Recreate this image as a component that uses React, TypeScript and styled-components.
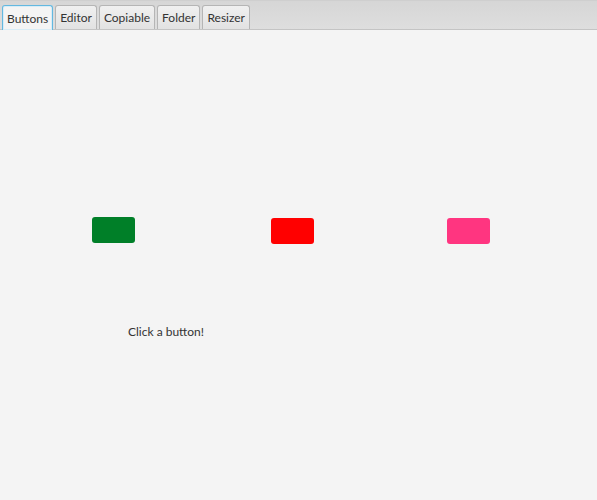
import React, { useState } from 'react'
import styled, { createGlobalStyle } from 'styled-components'

const Global = createGlobalStyle`
  html, body { margin: 0; padding: 0; background: #f4f4f4; }
  body { font-family: Lato, "Open Sans", "Liberation Sans", sans-serif; font-size: 12px; color: #333; }
`

const Page = styled.div`
  width: 597px;
  height: 500px;
  display: flex;
  flex-direction: column;
  background: #f4f4f4;
  overflow: hidden;
`

const TabBar = styled.div`
  height: 30px;
  box-sizing: border-box;
  display: flex;
  align-items: flex-end;
  gap: 2px;
  padding: 0 0 0 2px;
  background: linear-gradient(#d6d6d6, #dedede);
  border-bottom: 1px solid #c4c4c4;
  border-top: 1px solid #cfcfcf;
`

const Tab = styled.div<{ $active?: boolean }>`
  box-sizing: border-box;
  padding: 0 4px;
  display: flex;
  align-items: center;
  justify-content: center;
  border: 1px solid ${(p) => (p.$active ? '#63b8e0' : '#b5b5b5')};
  border-bottom: none;
  border-radius: 3px 3px 0 0;
  background: ${(p) => (p.$active ? '#f4f4f4' : 'linear-gradient(#f0f0f0, #e2e2e2)')};
  box-shadow: ${(p) => (p.$active ? 'inset 0 0 0 1px #d8ecf6' : 'none')};
  margin-bottom: ${(p) => (p.$active ? '-1px' : '0')};
  height: ${(p) => (p.$active ? '25px' : '24px')};
  color: #333;
  font-size: 12px;
  cursor: default;
`

const Content = styled.div`
  flex: 1;
  display: flex;
  flex-direction: column;
  padding-top: 187px;
`

const ButtonRow = styled.div`
  display: flex;
  align-items: flex-start;
  padding-left: 92px;
`

const ColorButton = styled.button<{ $color: string; $drop?: number; $left?: number }>`
  width: 43px;
  height: 26px;
  border: none;
  border-radius: 3px;
  background: ${(p) => p.$color};
  margin-top: ${(p) => p.$drop ?? 0}px;
  margin-left: ${(p) => p.$left ?? 0}px;
  padding: 0;
  cursor: pointer;
`

const Message = styled.div`
  margin: 80px 0 0 128px;
  font-size: 12px;
  color: #333;
`

const tabs = ['Buttons', 'Editor', 'Copiable', 'Folder', 'Resizer']

export default function App() {
  const [active, setActive] = useState(0)
  const [msg, setMsg] = useState('Click a button!')
  return (
    <Page>
      <Global />
      <TabBar>
        {tabs.map((t, i) => (
          <Tab key={t} $active={i === active} onClick={() => setActive(i)}>
            {t}
          </Tab>
        ))}
      </TabBar>
      <Content>
        <ButtonRow>
          <ColorButton $color='#007f28' onClick={() => setMsg('Green clicked')} />
          <ColorButton $color='#ff0000' $drop={1} $left={136} onClick={() => setMsg('Red clicked')} />
          <ColorButton $color='#ff3580' $drop={1} $left={133} onClick={() => setMsg('Pink clicked')} />
        </ButtonRow>
        <Message>{msg}</Message>
      </Content>
    </Page>
  )
}
